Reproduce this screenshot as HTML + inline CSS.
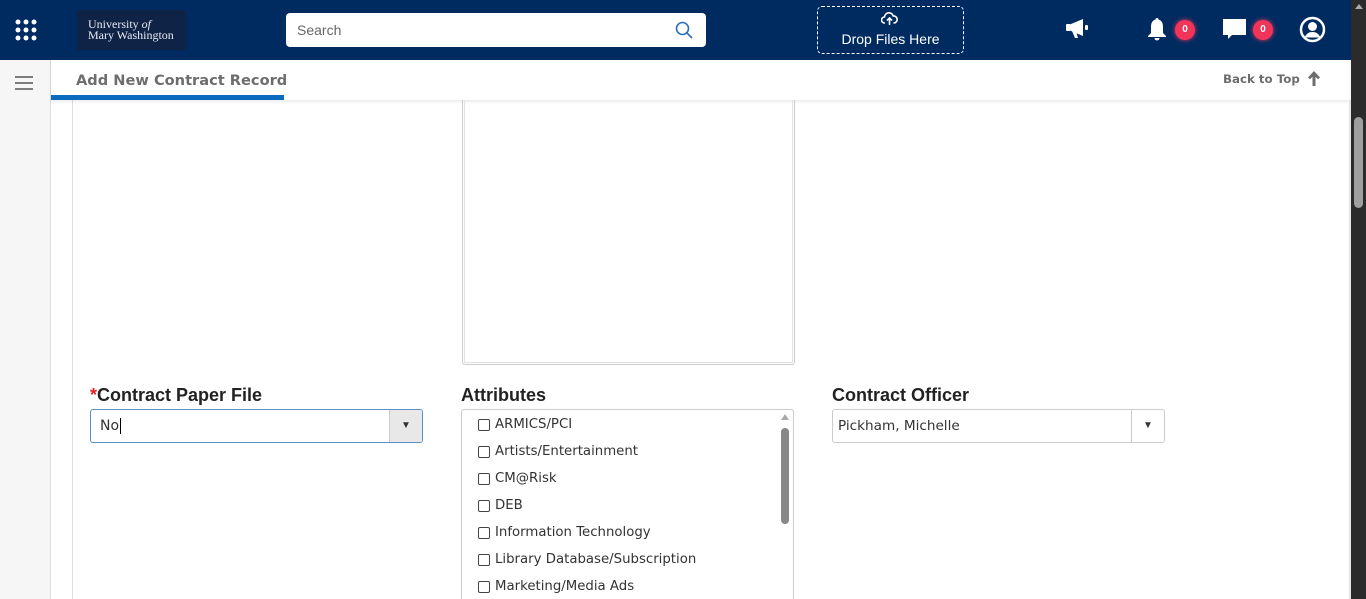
<!DOCTYPE html>
<html style="overflow:hidden;height:599px"><head><meta charset="utf-8"><style>
*{box-sizing:border-box;margin:0;padding:0}
body{width:1366px;height:599px;overflow:hidden;background:#fff;font-family:"Liberation Sans",sans-serif;position:relative}
.hdr{position:absolute;left:0;top:0;width:1351px;height:60px;background:#002b60}
.side{position:absolute;left:0;top:60px;width:51px;height:539px;background:#f6f6f6;border-right:1px solid #ddd}
.sub{position:absolute;left:51px;top:60px;width:1298px;height:40px;background:#fff;box-shadow:0 2px 3px rgba(0,0,0,.08)}
.sb{position:absolute;left:1351px;top:0;width:15px;height:599px;background:#2b2b2b}
.abs{position:absolute}
.lbl{position:absolute;font-weight:bold;font-size:18px;color:#222}
.item{position:absolute;left:478px;font-family:"DejaVu Sans",sans-serif;font-size:13.3px;color:#333;display:flex;align-items:center}
.item i{display:inline-block;width:12px;height:12px;border:1px solid #444;border-radius:2px;margin-right:5px}
.badge{position:absolute;width:20px;height:20px;border-radius:10px;background:#f0345a;color:#fff;font-size:10px;font-weight:bold;text-align:center;line-height:20px;box-shadow:0 0 5px #f0345a}
</style></head><body>
<div class="hdr">
 <svg class="abs" style="left:15px;top:19px" width="22" height="22" viewBox="0 0 22 22" fill="#fff"><circle cx="3" cy="3" r="2.5"/><circle cx="11" cy="3" r="2.5"/><circle cx="19" cy="3" r="2.5"/><circle cx="3" cy="11" r="2.5"/><circle cx="11" cy="11" r="2.5"/><circle cx="19" cy="11" r="2.5"/><circle cx="3" cy="19" r="2.5"/><circle cx="11" cy="19" r="2.5"/><circle cx="19" cy="19" r="2.5"/></svg>
 <div class="abs" style="left:77px;top:10px;width:109px;height:40px;background:#0f2347;color:#e8ecf2;font-family:'Liberation Serif',serif;font-size:12px;line-height:11px;padding:9px 0 0 11px">University <i>of</i><br>Mary Washington</div>
 <div class="abs" style="left:286px;top:13px;width:420px;height:34px;background:#fff;border-radius:4px;font-size:14px;color:#666;padding:9px 11px">Search</div>
 <svg class="abs" style="left:675px;top:21px" width="18" height="18" viewBox="0 0 18 18" fill="none" stroke="#2a6fc0" stroke-width="1.6"><circle cx="7.5" cy="7.5" r="6"/><path d="M12 12l5 5"/></svg>
 <div class="abs" style="left:817px;top:6px;width:147px;height:48px;border:1px dashed #fff;border-radius:5px;color:#fff;font-size:14px;text-align:center;padding-top:24px">Drop Files Here</div>
 <svg class="abs" style="left:881px;top:12px" width="17" height="14" viewBox="0 0 17 14" fill="none" stroke="#fff" stroke-width="1.6"><path d="M4 11H3.5a3 3 0 010-6 4.5 4.5 0 018.8-1A3.3 3.3 0 0113 11h-.5M8.5 13V6M6 8.5l2.5-2.5 2.5 2.5"/></svg>
 <svg class="abs" style="left:1065px;top:17px" width="28" height="24" viewBox="0 0 28 24" fill="#fff"><rect x="1" y="7" width="5" height="7" rx="1"/><path d="M6 7l12-5v17L6 14z"/><rect x="20" y="8" width="3" height="5" rx="1"/><path d="M7 14l3 7h3l-2-7z"/></svg>
 <svg class="abs" style="left:1146px;top:17px" width="22" height="26" viewBox="0 0 22 26" fill="#fff"><path d="M11 1c1 0 1.5.7 1.5 1.5C16 3.5 17 6.5 17 10v6l3 3v1H2v-1l3-3v-6c0-3.5 1-6.5 4.5-7.5C9.5 1.7 10 1 11 1z"/><path d="M8.5 21h5a2.5 2.5 0 01-5 0z"/></svg>
 <div class="badge" style="left:1175px;top:20px">0</div>
 <svg class="abs" style="left:1222px;top:18px" width="25" height="23" viewBox="0 0 25 23" fill="#fff"><path d="M1 1h23v16H10l-4 4v-4H1z"/></svg>
 <div class="badge" style="left:1253px;top:20px">0</div>
 <svg class="abs" style="left:1299px;top:16px" width="27" height="27" viewBox="0 0 27 27"><circle cx="13.5" cy="13.5" r="11.5" fill="none" stroke="#fff" stroke-width="2.5"/><circle cx="13.5" cy="10.5" r="4.5" fill="#fff"/><path d="M5.5 21.5c2-4 4.5-5.5 8-5.5s6 1.5 8 5.5" fill="#fff"/></svg>
</div>
<div class="side"><svg class="abs" style="left:15px;top:16px" width="18" height="14" viewBox="0 0 18 14" stroke="#555" stroke-width="1.6"><path d="M0 1h18M0 7h18M0 13h18"/></svg></div>
<div class="abs" style="left:72px;top:100px;width:1px;height:499px;background:#ddd"></div>
<div class="abs" style="left:1349px;top:100px;width:2px;height:499px;background:#e6e6e6"></div>
<div class="sub">
 <div class="abs" style="left:25px;top:12px;font-family:'DejaVu Sans',sans-serif;font-weight:bold;font-size:14.6px;color:#6d6d6d">Add New Contract Record</div>
 <div class="abs" style="left:0;top:35px;width:233px;height:5px;background:#0b6bbf"></div>
 <div class="abs" style="left:1172px;top:12px;font-family:'DejaVu Sans',sans-serif;font-weight:bold;font-size:11.8px;color:#6d6d6d">Back to Top</div>
 <svg class="abs" style="left:1256px;top:11px" width="14" height="15" viewBox="0 0 14 15" fill="#6d6d6d"><path d="M7 0L13 6.5 11 8.3 8.5 5.8V15h-3V5.8L3 8.3 1 6.5z"/></svg>
</div>
<div class="abs" style="left:462px;top:100px;width:333px;height:265px;border:1px solid #ccc;border-top:none;border-radius:0 0 3px 3px"></div>
<div class="abs" style="left:464px;top:100px;width:329px;height:263px;border:1px solid #e2e2e2;border-top:none"></div>
<div class="lbl" style="left:90px;top:385px"><span style="color:#e02020">*</span>Contract Paper File</div>
<div class="abs" style="left:90px;top:409px;width:333px;height:34px;border:1px solid #5b8fc4;border-radius:3px;background:#fff;font-family:'DejaVu Sans',sans-serif;font-size:14px;color:#333;padding:8px 9px">No<span style="border-left:1px solid #000;margin-left:1px"></span></div>
<div class="abs" style="left:389px;top:410px;width:33px;height:32px;background:#e8e8e8;border-left:1px solid #ccc;border-radius:0 3px 3px 0;font-size:10px;text-align:center;line-height:32px;color:#333">▼</div>
<div class="lbl" style="left:461px;top:385px">Attributes</div>
<div class="abs" style="left:461px;top:409px;width:333px;height:195px;border:1px solid #ccc;border-radius:3px"></div>
<div class="abs" style="left:781px;top:414px;border-left:4px solid transparent;border-right:4px solid transparent;border-bottom:6px solid #aaa"></div>
<div class="abs" style="left:781px;top:428px;width:8px;height:96px;background:#888;border-radius:4px"></div>
<div class="item" style="top:417px"><i></i>ARMICS/PCI</div>
<div class="item" style="top:444px"><i></i>Artists/Entertainment</div>
<div class="item" style="top:471px"><i></i>CM@Risk</div>
<div class="item" style="top:498px"><i></i>DEB</div>
<div class="item" style="top:525px"><i></i>Information Technology</div>
<div class="item" style="top:552px"><i></i>Library Database/Subscription</div>
<div class="item" style="top:579px"><i></i>Marketing/Media Ads</div>
<div class="lbl" style="left:832px;top:385px">Contract Officer</div>
<div class="abs" style="left:832px;top:409px;width:333px;height:34px;border:1px solid #ccc;border-radius:3px;font-family:'DejaVu Sans',sans-serif;font-size:13.6px;color:#333;padding:8px 5px">Pickham, Michelle</div>
<div class="abs" style="left:1131px;top:410px;width:33px;height:32px;border-left:1px solid #ccc;font-size:10px;text-align:center;line-height:32px;color:#333">▼</div>
<div class="sb"><div class="abs" style="left:4px;top:4px;border-left:4px solid transparent;border-right:4px solid transparent;border-bottom:5px solid #aaa"></div><div class="abs" style="left:3px;top:117px;width:9px;height:91px;background:#9f9f9f;border-radius:5px"></div></div>
</body></html>
